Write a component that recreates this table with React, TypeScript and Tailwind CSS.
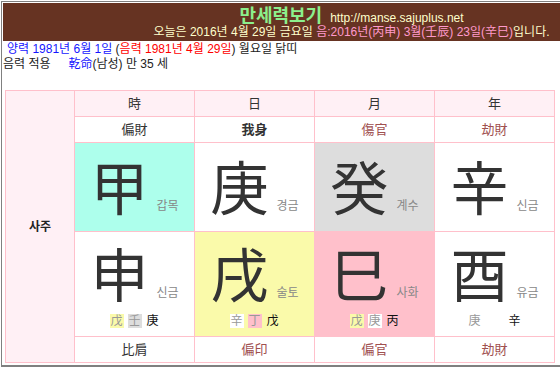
import React from "react";

const SANS = "font-['Liberation_Sans','Noto_Sans_CJK_KR',sans-serif]";

type Hid = { c: string; bg: string; dark?: boolean } | null;

function Hidden({ items }: { items: Hid[] }) {
  return (
    <div className="flex items-center justify-center gap-[4px] h-[14px]">
      {items.map((h, i) =>
        h ? (
          <span
            key={i}
            className={`inline-block w-[14px] h-[14px] text-center text-[12px] leading-[14px] ${h.bg} ${h.dark ? "text-[#111]" : "text-[#999]"}`}
          >
            {h.c}
          </span>
        ) : (
          <span key={i} className="inline-block w-[14px] h-[14px]" />
        )
      )}
    </div>
  );
}

function Big({ c, label }: { c: string; label: string }) {
  return (
    <div className="flex items-baseline">
      <span className="text-[58px] leading-none text-[#333] font-['Noto_Sans_CJK_KR',sans-serif]">{c}</span>
      <span className="ml-[8px] text-[12px] text-[#888]">{label}</span>
    </div>
  );
}

export default function App() {
  return (
    <div className={`w-[560px] h-[368px] bg-white overflow-hidden ${SANS}`}>
      <div className="mt-px ml-px h-[366px] border-t border-l border-b-2 border-[#808080] pt-px pl-px">
        <div className="h-[38px] bg-[#663322] flex flex-col items-center pl-[140px]">
          <div className="flex items-baseline h-[22px]">
            <span className="text-[18px] font-bold leading-[22px] text-[#8cf08c] font-['Noto_Sans_CJK_KR',sans-serif]">만세력보기</span>
            <span className="ml-[8px] text-[12px] text-[#ffffcc]">http://manse.sajuplus.net</span>
          </div>
          <div className="text-[12px] leading-[15px] text-[#ffffcc] whitespace-nowrap">
            오늘은 2016년 4월 29일 금요일{" "}
            <span className="text-[#ff99cc]">음:2016년(丙申) 3월(壬辰) 23일(辛巳)</span>
            입니다.
          </div>
        </div>
        <div className="text-[12px] leading-[15px] text-[#222] pt-px">
          <div className="pl-[4px] whitespace-nowrap">
            <span className="text-[#1515ff]">양력 1981년 6월 1일</span> (
            <span className="text-[#ff0000]">음력 1981년 4월 29일</span>) 월요일 닭띠
          </div>
          <div className="whitespace-nowrap">
            음력 적용<span className="ml-[18px] text-[#1515ff]">乾命</span>(남성) 만 35 세
          </div>
        </div>
        <div className="mt-[18px] ml-[2px] w-[550px] grid grid-cols-[68px_119px_119px_119px_119px] grid-rows-[25px_25px_88px_104px_25px] gap-px p-px bg-[#ffc0cb] text-[13px] text-[#333]">
          <div className="row-span-5 bg-[#fff0f5] flex items-center justify-center font-bold text-[12px] text-[#222]">사주</div>
          {["時", "日", "月", "年"].map((h) => (
            <div key={h} className="bg-[#fff0f5] flex items-center justify-center">{h}</div>
          ))}
          <div className="bg-white flex items-center justify-center">偏財</div>
          <div className="bg-white flex items-center justify-center font-bold">我身</div>
          <div className="bg-white flex items-center justify-center text-[#a05050]">傷官</div>
          <div className="bg-white flex items-center justify-center text-[#a05050]">劫財</div>

          <div className="bg-[#adffec] flex items-center justify-center pb-[3px]"><Big c="甲" label="갑목" /></div>
          <div className="bg-white flex items-center justify-center pb-[3px]"><Big c="庚" label="경금" /></div>
          <div className="bg-[#dddddd] flex items-center justify-center pb-[3px]"><Big c="癸" label="계수" /></div>
          <div className="bg-white flex items-center justify-center pb-[3px]"><Big c="辛" label="신금" /></div>

          <div className="bg-white flex flex-col items-center pt-[11px] gap-[12px]">
            <Big c="申" label="신금" />
            <Hidden items={[{ c: "戊", bg: "bg-[#fafaaa]" }, { c: "壬", bg: "bg-[#dddddd]" }, { c: "庚", bg: "", dark: true }]} />
          </div>
          <div className="bg-[#fafaaa] flex flex-col items-center pt-[11px] gap-[12px]">
            <Big c="戌" label="술토" />
            <Hidden items={[{ c: "辛", bg: "bg-white" }, { c: "丁", bg: "bg-[#ffc0cb]" }, { c: "戊", bg: "", dark: true }]} />
          </div>
          <div className="bg-[#ffc0cb] flex flex-col items-center pt-[11px] gap-[12px]">
            <Big c="巳" label="사화" />
            <Hidden items={[{ c: "戊", bg: "bg-[#fafaaa]" }, { c: "庚", bg: "bg-white" }, { c: "丙", bg: "", dark: true }]} />
          </div>
          <div className="bg-white flex flex-col items-center pt-[11px] gap-[12px]">
            <Big c="酉" label="유금" />
            <div className="flex items-center justify-center gap-[26px] h-[14px]">
              <span className="inline-block w-[14px] h-[14px] text-center text-[12px] leading-[14px] text-[#999]">庚</span>
              <span className="inline-block w-[14px] h-[14px] text-center text-[12px] leading-[14px] text-[#111]">辛</span>
            </div>
          </div>

          <div className="bg-white flex items-center justify-center">比肩</div>
          <div className="bg-white flex items-center justify-center text-[#a05050]">偏印</div>
          <div className="bg-white flex items-center justify-center text-[#a05050]">偏官</div>
          <div className="bg-white flex items-center justify-center text-[#a05050]">劫財</div>
        </div>
      </div>
    </div>
  );
}
